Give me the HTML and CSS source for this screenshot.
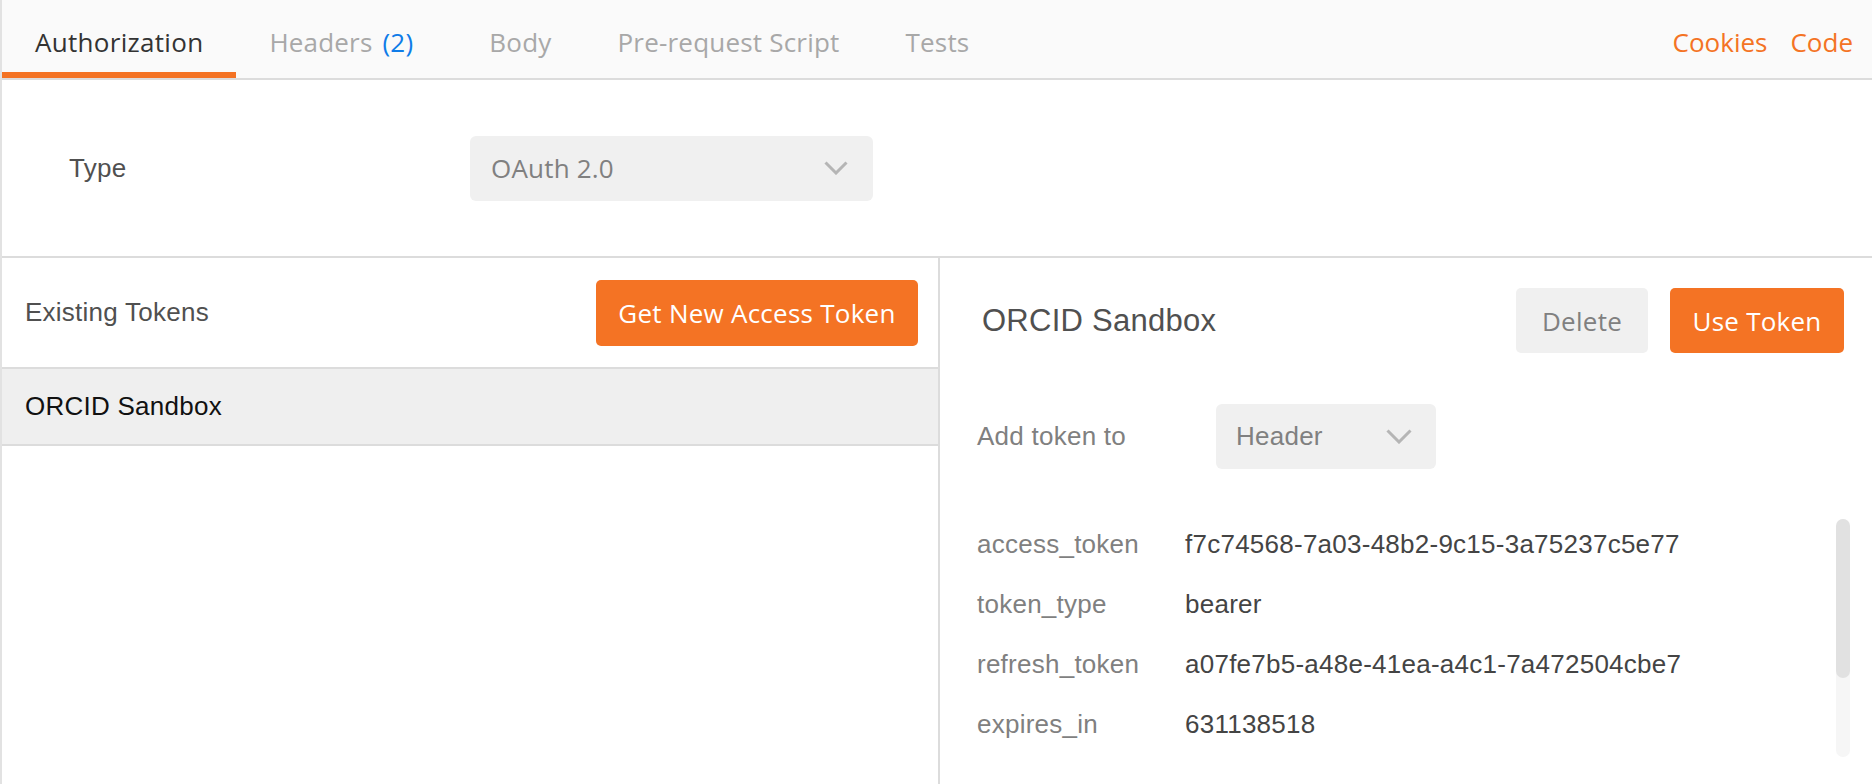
FILE: index.html
```html
<!DOCTYPE html>
<html lang="en">
<head>
<meta charset="utf-8">
<title>Authorization</title>
<link rel="stylesheet" href="styles.css">
</head>
<body>
<div class="app">
  <div class="tabbar">
    <div class="tabs">
      <div class="tab active">Authorization</div>
      <div class="tab tab-headers">Headers <span class="count">(2)</span></div>
      <div class="tab">Body</div>
      <div class="tab">Pre-request Script</div>
      <div class="tab">Tests</div>
    </div>
    <div class="links">
      <span class="link">Cookies</span>
      <span class="link">Code</span>
    </div>
  </div>

  <div class="type-row">
    <span class="type-label">Type</span>
    <div class="select select-type">
      <span>OAuth 2.0</span>
      <svg class="chev" width="24" height="14" viewBox="0 0 24 14"><polyline points="1.5,1.5 12,12 22.5,1.5" fill="none" stroke="#b5b5b5" stroke-width="3"/></svg>
    </div>
  </div>

  <div class="split">
    <div class="left">
      <div class="left-head">
        <span class="left-title">Existing Tokens</span>
        <button class="btn btn-orange btn-new">Get New Access Token</button>
      </div>
      <div class="token-item">ORCID Sandbox</div>
    </div>

    <div class="right">
      <div class="right-head">
        <h2 class="token-name">ORCID Sandbox</h2>
        <div class="actions">
          <button class="btn btn-gray btn-delete">Delete</button>
          <button class="btn btn-orange btn-use">Use Token</button>
        </div>
      </div>
      <div class="add-row">
        <span class="add-label">Add token to</span>
        <div class="select select-header">
          <span>Header</span>
          <svg class="chev" width="26" height="15" viewBox="0 0 26 15"><polyline points="1.5,1.5 13,13 24.5,1.5" fill="none" stroke="#b5b5b5" stroke-width="3"/></svg>
        </div>
      </div>
      <div class="details">
        <div class="row"><span class="key">access_token</span><span class="val">f7c74568-7a03-48b2-9c15-3a75237c5e77</span></div>
        <div class="row"><span class="key">token_type</span><span class="val">bearer</span></div>
        <div class="row"><span class="key">refresh_token</span><span class="val">a07fe7b5-a48e-41ea-a4c1-7a472504cbe7</span></div>
        <div class="row"><span class="key">expires_in</span><span class="val">631138518</span></div>
        <div class="scrollbar"><div class="thumb"></div></div>
      </div>
    </div>
  </div>
</div>
</body>
</html>
```

FILE: styles.css
```css
* { box-sizing: border-box; }

html, body {
  margin: 0;
  padding: 0;
  height: 784px;
  overflow: hidden;
  background: #ffffff;
}

.app {
  height: 784px;
  border-left: 2px solid #e2e2e2;
  font-family: "Liberation Sans", Arial, sans-serif;
  font-size: 26px;
  letter-spacing: 0.25px;
  display: flex;
  flex-direction: column;
}

/* Tab bar */
.tabbar {
  display: flex;
  justify-content: space-between;
  background: #fafafa;
  border-bottom: 2px solid #dcdcdc;
  height: 80px;
  flex-shrink: 0;
}

.tabs {
  display: flex;
}

.tab {
  font-family: "Open Sans", sans-serif;
  font-size: 26px;
  letter-spacing: 0.2px;
  line-height: 35px;
  padding: 25px 33px 12px;
  border-bottom: 6px solid transparent;
  color: #a8a8a8;
  white-space: nowrap;
}

.tab.active {
  color: #333333;
  border-bottom-color: #f47324;
  letter-spacing: 0.3px;
}

.tab-headers {
  padding-right: 43px;
}

.count {
  color: #0f7ce8;
  margin-left: 3px;
}

.links {
  display: flex;
  gap: 23px;
  padding: 25px 19px 0 0;
}

.link {
  font-family: "Open Sans", sans-serif;
  font-size: 26px;
  letter-spacing: 0;
  line-height: 35px;
  color: #f47324;
}

/* Type row */
.type-row {
  height: 178px;
  flex-shrink: 0;
  display: flex;
  align-items: center;
  padding-left: 67px;
  border-bottom: 2px solid #dcdcdc;
}

.type-label {
  width: 401px;
  color: #505050;
}

.select {
  display: flex;
  align-items: center;
  justify-content: space-between;
  height: 65px;
  background: #f0f0f0;
  border-radius: 6px;
  color: #808080;
}

.select-type {
  width: 403px;
  padding: 0 25px 0 21px;
  font-family: "Open Sans", sans-serif;
  letter-spacing: 0.2px;
}

.select-header {
  width: 220px;
  padding: 0 24px 0 20px;
}

/* Split */
.split {
  flex: 1;
  display: flex;
  min-height: 0;
}

.left {
  width: 938px;
  flex-shrink: 0;
  border-right: 2px solid #dcdcdc;
}

.left-head {
  height: 111px;
  display: flex;
  align-items: center;
  justify-content: space-between;
  padding: 0 20px 0 23px;
  border-bottom: 2px solid #dcdcdc;
}

.left-title {
  color: #505050;
}

.btn {
  border: none;
  font-family: "Open Sans", sans-serif;
  font-size: 26px;
  letter-spacing: 0.25px;
  height: 65px;
  border-radius: 5px;
  padding: 0;
  text-align: center;
}

.btn-orange {
  background: #f47324;
  color: #ffffff;
}

.btn-gray {
  background: #f0f0f0;
  color: #808080;
}

.btn-new {
  width: 322px;
  height: 66px;
}

.token-item {
  height: 77px;
  display: flex;
  align-items: center;
  padding-left: 23px;
  background: #efefef;
  border-bottom: 2px solid #dcdcdc;
  color: #111111;
}

.right {
  flex: 1;
  padding: 30px 0 0 37px;
}

.right-head {
  display: flex;
  align-items: center;
  justify-content: space-between;
  padding-right: 28px;
}

.token-name {
  margin: 0 0 0 5px;
  font-weight: normal;
  font-size: 31px;
  color: #505050;
}

.actions {
  display: flex;
  gap: 22px;
}

.btn-delete { width: 132px; }
.btn-use { width: 174px; }

.add-row {
  display: flex;
  align-items: center;
  margin-top: 51px;
}

.add-label {
  width: 239px;
  color: #808080;
}

.details {
  position: relative;
  margin-top: 45px;
}

.row {
  display: flex;
  line-height: 60px;
  white-space: nowrap;
}

.key {
  width: 208px;
  color: #808080;
}

.val {
  color: #444444;
}

.scrollbar {
  position: absolute;
  top: 5px;
  right: 22px;
  width: 14px;
  height: 238px;
  border-radius: 7px;
  background: #f6f6f6;
}

.thumb {
  height: 159px;
  border-radius: 7px;
  background: #e1e1e1;
}
```
